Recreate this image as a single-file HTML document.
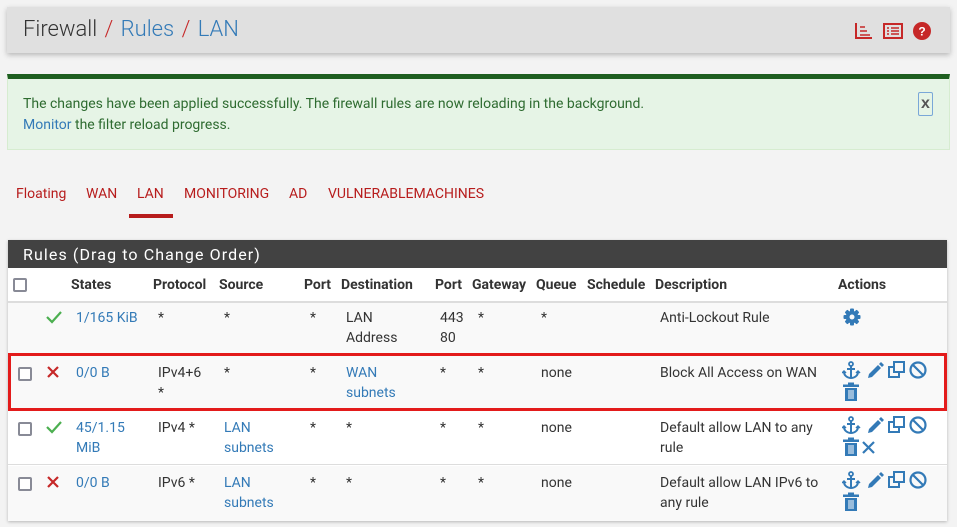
<!DOCTYPE html>
<html><head><meta charset="utf-8"><style>
*{margin:0;padding:0;box-sizing:border-box}
body{width:957px;height:527px;background:#f3f3f3;font-family:"Roboto","Liberation Sans",sans-serif;font-size:14px;color:#333;position:relative;overflow:hidden}
.a{position:absolute;white-space:nowrap;line-height:20px}
.blue{color:#337ab7}
.b{font-weight:bold}
.cb{position:absolute;width:14px;height:14px;border:2px solid #888a96;border-radius:2px;background:#fff}
svg{position:absolute}
</style></head><body>
<div style="position:absolute;left:7px;top:7px;width:943px;height:46px;background:#e0e0e0;box-shadow:0 2px 5px rgba(0,0,0,.25)"></div>
<div class="a" style="left:23px;top:16px;font-size:22px;font-weight:300;line-height:28px;color:#333;word-spacing:2px">Firewall <span style="color:#c62828">/</span>&nbsp;<span class="blue">Rules</span> <span style="color:#c62828">/</span>&nbsp;<span class="blue">LAN</span></div>
<svg style="left:855px;top:23px" width="18" height="16" viewBox="0 0 18 16"><path d="M1 0v15h16" stroke="#c62828" stroke-width="2" fill="none"/><path d="M5 4h5M5 8h7M5 12h10" stroke="#c62828" stroke-width="1.5"/></svg>
<svg style="left:883px;top:23px" width="20" height="16" viewBox="0 0 20 16"><rect x="1" y="1" width="18" height="14" stroke="#c62828" stroke-width="2" fill="none"/><path d="M4 5h2M4 8h2M4 11h2M8 5h8M8 8h8M8 11h8" stroke="#c62828" stroke-width="1.6"/></svg>
<svg style="left:913px;top:22px" width="18" height="18"><circle cx="9" cy="9" r="9" fill="#c62828"/><text x="9" y="13.5" font-size="12" font-weight="bold" fill="#fff" text-anchor="middle" font-family="Liberation Sans">?</text></svg>

<div style="position:absolute;left:7px;top:74px;width:943px;height:76px;background:#e6f4e6;border-top:5px solid #1e5e20;border-left:1px solid #d6ecd0;border-right:1px solid #d6ecd0;border-bottom:1px solid #d6ecd0"></div>
<div class="a" style="left:23px;top:94px;color:#2e6b30;font-size:14px">The changes have been applied successfully. The firewall rules are now reloading in the background.</div>
<div class="a" style="left:23px;top:115px;color:#2e6b30;font-size:14px"><span class="blue">Monitor</span> the filter reload progress.</div>
<div style="position:absolute;left:918px;top:92px;width:15px;height:24px;border:1px solid #7aa7d8;border-radius:2px;color:#555;font-weight:bold;font-size:16px;text-align:center;line-height:22px;font-family:'Liberation Sans'">x</div>

<div class="a" style="left:16px;top:184px;color:#b71c1c">Floating</div>
<div class="a" style="left:86px;top:184px;color:#b71c1c">WAN</div>
<div class="a" style="left:137px;top:184px;color:#b71c1c">LAN</div>
<div style="position:absolute;left:129px;top:214px;width:44px;height:4px;background:#b71c1c"></div>
<div class="a" style="left:184px;top:184px;color:#b71c1c">MONITORING</div>
<div class="a" style="left:289px;top:184px;color:#b71c1c">AD</div>
<div class="a" style="left:328px;top:184px;color:#b71c1c">VULNERABLEMACHINES</div>

<div style="position:absolute;left:8px;top:240px;width:939px;height:281px;background:#fff;box-shadow:0 1px 3px rgba(0,0,0,.25)"></div>
<div style="position:absolute;left:8px;top:240px;width:939px;height:28px;background:#424242"></div>
<div class="a" style="left:23px;top:245px;color:#fff;font-size:16px;letter-spacing:1.1px">Rules (Drag to Change Order)</div>
<div style="position:absolute;left:8px;top:301px;width:939px;height:2px;background:#ddd"></div>
<div class="cb" style="left:13px;top:278px"></div>
<div class="a b" style="left:71px;top:275px">States</div>
<div class="a b" style="left:153px;top:275px">Protocol</div>
<div class="a b" style="left:219px;top:275px">Source</div>
<div class="a b" style="left:304px;top:275px">Port</div>
<div class="a b" style="left:341px;top:275px">Destination</div>
<div class="a b" style="left:435px;top:275px">Port</div>
<div class="a b" style="left:472px;top:275px">Gateway</div>
<div class="a b" style="left:536px;top:275px">Queue</div>
<div class="a b" style="left:587px;top:275px">Schedule</div>
<div class="a b" style="left:655px;top:275px">Description</div>
<div class="a b" style="left:838px;top:275px">Actions</div>

<div style="position:absolute;left:8px;top:303px;width:939px;height:52px;background:#f9f9f9"></div>
<div style="position:absolute;left:8px;top:355px;width:939px;height:55px;background:#f9f9f9"></div>
<div style="position:absolute;left:8px;top:410px;width:939px;height:55px;background:#fff;border-top:1px solid #ddd;border-bottom:1px solid #ddd"></div>
<div style="position:absolute;left:8px;top:466px;width:939px;height:55px;background:#f9f9f9"></div>
<div style="position:absolute;left:8px;top:353px;width:939px;height:58px;border:3px solid #e31b1b"></div>

<!-- row1 -->
<svg style="left:45px;top:310px" width="18" height="14"><path d="M2 7l5 5L16 2" stroke="#4caf50" stroke-width="2.2" fill="none"/></svg>
<div class="a blue" style="left:76px;top:308px">1/165 KiB</div>
<div class="a" style="left:158px;top:308px">*</div>
<div class="a" style="left:224px;top:308px">*</div>
<div class="a" style="left:310px;top:308px">*</div>
<div class="a" style="left:346px;top:308px">LAN<br>Address</div>
<div class="a" style="left:440px;top:308px">443<br>80</div>
<div class="a" style="left:478px;top:308px">*</div>
<div class="a" style="left:541px;top:308px">*</div>
<div class="a" style="left:660px;top:308px">Anti-Lockout Rule</div>
<svg style="left:843px;top:308px" width="18" height="18" viewBox="0 0 18 18"><g fill="#337ab7"><rect x="7" y="0.5" width="4" height="17" rx="1"/><rect x="0.5" y="7" width="17" height="4" rx="1"/><rect x="7" y="0.5" width="4" height="17" rx="1" transform="rotate(45 9 9)"/><rect x="7" y="0.5" width="4" height="17" rx="1" transform="rotate(-45 9 9)"/><circle cx="9" cy="9" r="6.3"/></g><circle cx="9" cy="9" r="2.5" fill="#f9f9f9"/></svg>

<!-- row2 -->
<div class="cb" style="left:18px;top:367px"></div>
<svg style="left:46px;top:365px" width="14" height="14"><path d="M2 2l10 10M12 2L2 12" stroke="#c62828" stroke-width="2.2"/></svg>
<div class="a blue" style="left:76px;top:363px">0/0 B</div>
<div class="a" style="left:158px;top:363px">IPv4+6<br>*</div>
<div class="a" style="left:224px;top:363px">*</div>
<div class="a" style="left:310px;top:363px">*</div>
<div class="a blue" style="left:346px;top:363px">WAN<br>subnets</div>
<div class="a" style="left:440px;top:363px">*</div>
<div class="a" style="left:478px;top:363px">*</div>
<div class="a" style="left:541px;top:363px">none</div>
<div class="a" style="left:660px;top:363px">Block All Access on WAN</div>

<!-- row3 -->
<div class="cb" style="left:18px;top:422px"></div>
<svg style="left:45px;top:420px" width="18" height="14"><path d="M2 7l5 5L16 2" stroke="#4caf50" stroke-width="2.2" fill="none"/></svg>
<div class="a blue" style="left:76px;top:418px">45/1.15<br>MiB</div>
<div class="a" style="left:158px;top:418px">IPv4 *</div>
<div class="a blue" style="left:224px;top:418px">LAN<br>subnets</div>
<div class="a" style="left:310px;top:418px">*</div>
<div class="a" style="left:346px;top:418px">*</div>
<div class="a" style="left:440px;top:418px">*</div>
<div class="a" style="left:478px;top:418px">*</div>
<div class="a" style="left:541px;top:418px">none</div>
<div class="a" style="left:660px;top:418px">Default allow LAN to any<br>rule</div>

<!-- row4 -->
<div class="cb" style="left:18px;top:477px"></div>
<svg style="left:46px;top:475px" width="14" height="14"><path d="M2 2l10 10M12 2L2 12" stroke="#c62828" stroke-width="2.2"/></svg>
<div class="a blue" style="left:76px;top:473px">0/0 B</div>
<div class="a" style="left:158px;top:473px">IPv6 *</div>
<div class="a blue" style="left:224px;top:473px">LAN<br>subnets</div>
<div class="a" style="left:310px;top:473px">*</div>
<div class="a" style="left:346px;top:473px">*</div>
<div class="a" style="left:440px;top:473px">*</div>
<div class="a" style="left:478px;top:473px">*</div>
<div class="a" style="left:541px;top:473px">none</div>
<div class="a" style="left:660px;top:473px">Default allow LAN IPv6 to<br>any rule</div>

<svg style="left:842px;top:361px" width="90" height="42" viewBox="0 0 90 42">
<g fill="none" stroke="#337ab7">
<circle cx="9" cy="3" r="2" stroke-width="1.8"/><path d="M9 5v12M5 8h8M2 11c0 4 4 6 7 6s7-2 7-6" stroke-width="2"/><path d="M0 12l2-2 2 2M14 12l2-2 2 2" stroke-width="1.5"/>
<path d="M26 17l1-4 9-9 3 3-9 9z" fill="#337ab7" stroke="none"/><path d="M37 3l2-2 3 3-2 2z" fill="#337ab7" stroke="none"/>
<rect x="47" y="6" width="10" height="10" stroke-width="2"/><rect x="52" y="1" width="10" height="10" stroke-width="2" fill="#f9f9f9"/>
<circle cx="76" cy="9" r="7.5" stroke-width="2.2"/><path d="M71 4l10 10" stroke-width="2.2"/>
<rect x="3" y="27" width="12" height="13" fill="#337ab7" stroke="none"/><rect x="1" y="23.5" width="16" height="2.5" fill="#337ab7" stroke="none"/><rect x="6" y="21.5" width="6" height="2" fill="#337ab7" stroke="none"/><path d="M7 29v9M9 29v9M11 29v9" stroke="#fff" stroke-width="1"/>
</g></svg>
<svg style="left:842px;top:416px" width="90" height="42" viewBox="0 0 90 42">
<g fill="none" stroke="#337ab7">
<circle cx="9" cy="3" r="2" stroke-width="1.8"/><path d="M9 5v12M5 8h8M2 11c0 4 4 6 7 6s7-2 7-6" stroke-width="2"/><path d="M0 12l2-2 2 2M14 12l2-2 2 2" stroke-width="1.5"/>
<path d="M26 17l1-4 9-9 3 3-9 9z" fill="#337ab7" stroke="none"/><path d="M37 3l2-2 3 3-2 2z" fill="#337ab7" stroke="none"/>
<rect x="47" y="6" width="10" height="10" stroke-width="2"/><rect x="52" y="1" width="10" height="10" stroke-width="2" fill="#fff"/>
<circle cx="76" cy="9" r="7.5" stroke-width="2.2"/><path d="M71 4l10 10" stroke-width="2.2"/>
<rect x="3" y="27" width="12" height="13" fill="#337ab7" stroke="none"/><rect x="1" y="23.5" width="16" height="2.5" fill="#337ab7" stroke="none"/><rect x="6" y="21.5" width="6" height="2" fill="#337ab7" stroke="none"/><path d="M7 29v9M9 29v9M11 29v9" stroke="#fff" stroke-width="1"/>
<path d="M21 26l11 11M32 26L21 37" stroke-width="2.2"/>
</g></svg>
<svg style="left:842px;top:471px" width="90" height="42" viewBox="0 0 90 42">
<g fill="none" stroke="#337ab7">
<circle cx="9" cy="3" r="2" stroke-width="1.8"/><path d="M9 5v12M5 8h8M2 11c0 4 4 6 7 6s7-2 7-6" stroke-width="2"/><path d="M0 12l2-2 2 2M14 12l2-2 2 2" stroke-width="1.5"/>
<path d="M26 17l1-4 9-9 3 3-9 9z" fill="#337ab7" stroke="none"/><path d="M37 3l2-2 3 3-2 2z" fill="#337ab7" stroke="none"/>
<rect x="47" y="6" width="10" height="10" stroke-width="2"/><rect x="52" y="1" width="10" height="10" stroke-width="2" fill="#f9f9f9"/>
<circle cx="76" cy="9" r="7.5" stroke-width="2.2"/><path d="M71 4l10 10" stroke-width="2.2"/>
<rect x="3" y="27" width="12" height="13" fill="#337ab7" stroke="none"/><rect x="1" y="23.5" width="16" height="2.5" fill="#337ab7" stroke="none"/><rect x="6" y="21.5" width="6" height="2" fill="#337ab7" stroke="none"/><path d="M7 29v9M9 29v9M11 29v9" stroke="#fff" stroke-width="1"/>
</g></svg>
</body></html>
